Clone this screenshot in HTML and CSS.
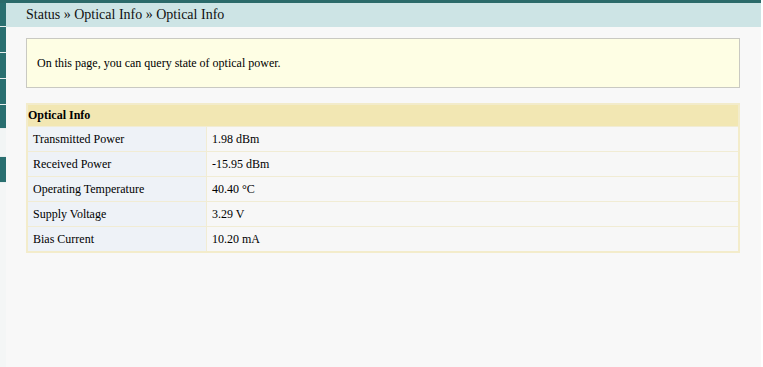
FILE: index.html
```html
<!DOCTYPE html>
<html lang="en">
<head>
    <meta charset="UTF-8">
    <title>Optical Info</title>
    <link rel="stylesheet" href="styles.css">
</head>
<body>
    <div class="topline"></div>
    <div class="layout">
        <!-- Side menu strip -->
        <ul class="menu">
            <li class="first"></li>
            <li></li>
            <li></li>
            <li></li>
            <li class="short"></li>
            <li class="active"></li>
            <li></li>
        </ul>

        <div class="main">
            <div class="crumb">Status &raquo; Optical Info &raquo; Optical Info</div>

            <div class="content">
                <div class="tip">On this page, you can query state of optical power.</div>

                <table class="info">
                    <tr>
                        <th colspan="2">Optical Info</th>
                    </tr>
                    <tr>
                        <td class="label">Transmitted Power</td>
                        <td>1.98 dBm</td>
                    </tr>
                    <tr>
                        <td class="label">Received Power</td>
                        <td>-15.95 dBm</td>
                    </tr>
                    <tr>
                        <td class="label">Operating Temperature</td>
                        <td>40.40 &deg;C</td>
                    </tr>
                    <tr>
                        <td class="label">Supply Voltage</td>
                        <td>3.29 V</td>
                    </tr>
                    <tr>
                        <td class="label">Bias Current</td>
                        <td>10.20 mA</td>
                    </tr>
                </table>
            </div>
        </div>
    </div>
</body>
</html>
```

FILE: styles.css
```css
body {
    margin: 0;
    font-family: 'Liberation Serif', 'Times New Roman', serif;
    color: #000;
    background: #fff;
    height: 367px;
    overflow: hidden;
}

.topline {
    height: 3px;
    width: 761px;
    background: #2b6a6a;
}

.layout {
    display: flex;
    width: 761px;
    height: 364px;
}

/* Side menu */
.menu {
    list-style: none;
    margin: 0;
    padding: 0;
    width: 6px;
    background: #f4f6f6;
}

.menu li {
    height: 25px;
    background: #2a6f70;
    border-bottom: 1px solid #e8eeee;
}

.menu li.first {
    height: 23px;
}

.menu li.short {
    height: 23px;
}

.menu li.active {
    height: 27px;
    background: #f2f5f5;
}

.main {
    flex: 1;
    background: #f8f8f8;
}

.crumb {
    height: 24px;
    line-height: 24px;
    padding-left: 20px;
    font-size: 14px;
    color: #111;
    background: #cde4e5;
}

.content {
    padding: 11px 21px 0 20px;
}

.tip {
    height: 48px;
    line-height: 48px;
    padding-left: 10px;
    font-size: 12px;
    background: #fefee4;
    border: 1px solid #c9c9c2;
}

.info {
    width: 100%;
    margin-top: 15px;
    border-collapse: collapse;
    border: 2px solid #f3eccb;
    font-size: 12px;
}

.info th {
    height: 21px;
    padding: 0;
    text-align: left;
    font-size: 12px;
    font-weight: bold;
    background: #f2e7b3;
}

.info td {
    height: 24px;
    padding: 0 0 0 5px;
    background: #f7f7f7;
    border: 1px solid #f1ecd4;
}

.info td.label {
    width: 173px;
    background: #eef2f7;
}
```
